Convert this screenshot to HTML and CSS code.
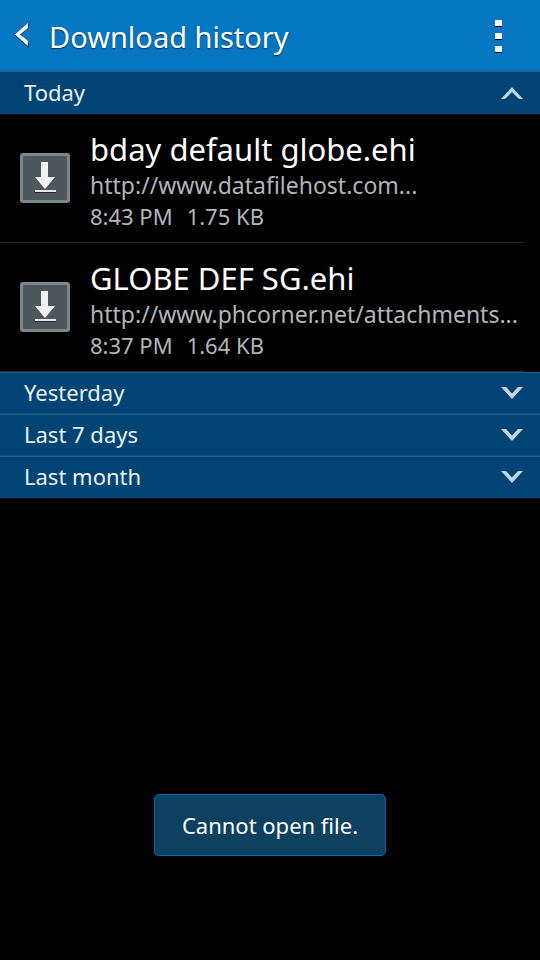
FILE: index.html
```html
<!DOCTYPE html>
<html lang="en">
<head>
<meta charset="utf-8">
<meta name="viewport" content="width=device-width, initial-scale=1">
<title>Download history</title>
<link rel="stylesheet" href="styles.css">
</head>
<body>
<header class="bar">
  <button class="back" aria-label="Back">
    <svg width="14" height="26" viewBox="0 0 14 26"><path class="shade" d="M14 0V5L5 12.500 14 20V25L0 12.500Z"/><path d="M13 0V5L5 11.500 13 18V23L0 11.500Z"/></svg>
  </button>
  <h1 class="title">Download history</h1>
  <button class="more" aria-label="More options">
    <svg width="7" height="34" viewBox="0 0 7 34"><path fill="#000" d="M0 1h7v6H0zM0 14h7v6H0zM0 27h7v6H0z"/><path fill="#fff" d="M0 0h7v6H0zM0 13h7v6H0zM0 26h7v6H0z"/></svg>
  </button>
</header>
<main>
  <button class="group open" aria-expanded="true">
    <span>Today</span>
    <svg class="chevron" width="24" height="14" viewBox="0 0 24 14"><path d="M1 13 12 1 23 13H19L12 6 5 13Z"/></svg>
  </button>
  <ul class="list">
    <li class="item">
      <svg class="file" width="50" height="50" viewBox="0 0 50 50"><rect width="50" height="50" rx="3" fill="#7b878e"/><rect x="3" y="3" width="44" height="44" rx="1" fill="#50575b"/><path fill="#f0f2f3" d="M21 9h7v15h7L25 36 15 24h6z"/><path fill="#22282b" d="M15 39h21v1H15z"/><path fill="#e5e8e9" d="M15 37h21v2H15z"/></svg>
      <div class="text">
        <h2 class="name">bday default globe.ehi</h2>
        <p class="meta url">http://www.datafilehost.com...</p>
        <p class="meta"><span>8:43 PM</span><span>1.75 KB</span></p>
      </div>
    </li>
    <li class="item">
      <svg class="file" width="50" height="50" viewBox="0 0 50 50"><rect width="50" height="50" rx="3" fill="#7b878e"/><rect x="3" y="3" width="44" height="44" rx="1" fill="#50575b"/><path fill="#f0f2f3" d="M21 9h7v15h7L25 36 15 24h6z"/><path fill="#22282b" d="M15 39h21v1H15z"/><path fill="#e5e8e9" d="M15 37h21v2H15z"/></svg>
      <div class="text">
        <h2 class="name">GLOBE DEF SG.ehi</h2>
        <p class="meta url">http://www.phcorner.net/attachments...</p>
        <p class="meta"><span>8:37 PM</span><span>1.64 KB</span></p>
      </div>
    </li>
  </ul>
  <button class="group" aria-expanded="false">
    <span>Yesterday</span>
    <svg class="chevron" width="24" height="14" viewBox="0 0 24 14"><path d="M1 1 12 13 23 1H18L12 7.500 6 1Z"/></svg>
  </button>
  <button class="group" aria-expanded="false">
    <span>Last 7 days</span>
    <svg class="chevron" width="24" height="14" viewBox="0 0 24 14"><path d="M1 1 12 13 23 1H18L12 7.500 6 1Z"/></svg>
  </button>
  <button class="group" aria-expanded="false">
    <span>Last month</span>
    <svg class="chevron" width="24" height="14" viewBox="0 0 24 14"><path d="M1 1 12 13 23 1H18L12 7.500 6 1Z"/></svg>
  </button>
</main>
<div class="toast" role="status">Cannot open file.</div>
</body>
</html>
```
FILE: styles.css
```css
* {
  box-sizing: border-box;
}

body {
  margin: 0;
  background: #000;
  color: #fff;
  font-family: "Noto Sans", sans-serif;
}

button {
  margin: 0;
  padding: 0;
  border: 0;
  background: none;
  color: inherit;
  font: inherit;
}

h1, h2, p, ul {
  margin: 0;
  padding: 0;
  font-weight: 400;
}

svg {
  display: block;
  flex: none;
}

.bar {
  display: flex;
  align-items: center;
  height: 72px;
  padding: 4px 38px 0 15px;
  background: #0576c2;
  border-bottom: 2px solid #1b68a0;
}

.back {
  margin-right: 20px;
  padding-bottom: 2px;
}

.back path {
  fill: #fff;
}

.back .shade {
  fill: #043a62;
}

.title {
  flex: 1;
  font-size: 29px;
  line-height: 40px;
  text-shadow: 0 1px 1px #022c4c;
}

.group {
  display: flex;
  align-items: center;
  justify-content: space-between;
  width: 100%;
  height: 42px;
  padding: 0 16px 0 24px;
  background: #004475;
  border-top: 1px solid #215e88;
  border-bottom: 1px solid #104f7b;
  color: #e9f1f6;
  font-size: 22px;
  line-height: 30px;
}

.group span {
  padding-bottom: 2px;
}

.open {
  border-top-color: #004475;
}

.chevron {
  fill: #c4d6e2;
}

.list {
  list-style: none;
}

.item {
  display: flex;
  align-items: center;
  gap: 20px;
  height: 129px;
  margin-right: 15px;
  padding-left: 20px;
  border-bottom: 1px solid #2b2b2b;
}

.text {
  min-width: 0;
  padding-top: 5px;
}

.name {
  font-size: 31px;
  line-height: 41px;
}

.meta {
  display: flex;
  gap: 14px;
  color: #b2b6b9;
  font-size: 22px;
  line-height: 31px;
  white-space: nowrap;
}

.url {
  font-size: 23px;
}

.toast {
  position: fixed;
  bottom: 104px;
  left: 50%;
  transform: translateX(-50%);
  padding: 15px 27px;
  border: 1px solid #1169a6;
  border-radius: 5px;
  background: #0e4060;
  font-size: 22px;
  line-height: 30px;
  white-space: nowrap;
}
```
